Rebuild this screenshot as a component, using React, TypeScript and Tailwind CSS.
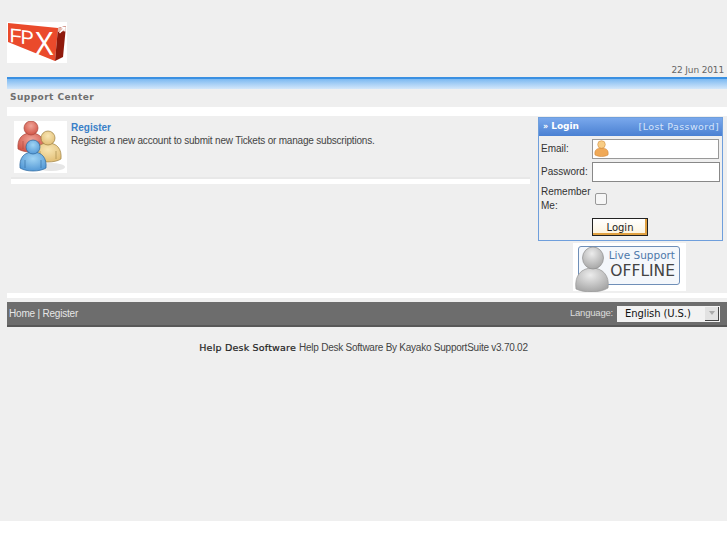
const sans = "font-['Liberation_Sans',Arial,sans-serif]";
const deja = "font-['DejaVu_Sans',Verdana,sans-serif]";

const Logo = () => (
  <svg width="60" height="41" viewBox="0 0 60 41" className="block bg-white">
    <polygon points="1,1 51,6 48,39 1,20" fill="#ea4a2b" />
    <polygon points="51,6 59,4 56,35 48,39" fill="#8f1a0c" />
    <polygon points="51,6 59,4 58,9 51,10" fill="#e6b9ae" />
    <text transform="translate(2.5 20) skewY(6)" fontFamily="Liberation Sans" fontSize="20" fill="#fff">F</text>
    <text transform="translate(13.5 21.5) skewY(8)" fontFamily="Liberation Sans" fontSize="20" fill="#fff">P</text>
    <text transform="translate(27.5 33) scale(0.88 1)" fontFamily="Liberation Sans" fontSize="33" fill="#fff">X</text>
    <path d="M52.5 11 L57.5 6 M54.5 5.8 H58 V9.5" stroke="#fff" strokeWidth="1.4" fill="none" />
  </svg>
);

const Person = ({ id, x, y, light, dark, edge }: { id: string; x: number; y: number; light: string; dark: string; edge: string }) => (
  <g transform={`translate(${x} ${y})`}>
    <defs>
      <radialGradient id={id} cx="50%" cy="35%" r="70%">
        <stop offset="0%" stopColor={light} />
        <stop offset="100%" stopColor={dark} />
      </radialGradient>
    </defs>
    <path d="M-13 21 C-14 11 -9 5 0 5 C9 5 14 11 13 21 C7 25 -7 25 -13 21Z" fill={`url(#${id})`} stroke={edge} strokeWidth="0.7" />
    <path d="M-8 13 V21 M8 13 V21" stroke={edge} strokeWidth="0.6" />
    <circle cx="0" cy="0" r="7" fill={`url(#${id})`} stroke={edge} strokeWidth="0.7" />
  </g>
);

const People = () => (
  <svg width="53" height="52" viewBox="0 0 53 52" className="block bg-white shrink-0">
    <ellipse cx="37" cy="46" rx="14" ry="4" fill="#e6e6e6" />
    <Person id="p1" x={17} y={7} light="#efa498" dark="#cf4c3e" edge="#a8463c" />
    <Person id="p2" x={34} y={17} light="#f8e6b4" dark="#e0bb70" edge="#9c7f42" />
    <Person id="p3" x={19} y={26} light="#a0d4f4" dark="#4f95d4" edge="#2b659c" />
  </svg>
);

const SmallUser = () => (
  <svg width="15" height="17" viewBox="0 0 15 17" className="block">
    <path d="M1 15 C0 10 3 8 7.5 8 C12 8 15 10 14 15 C10 17 5 17 1 15Z" fill="#f0a957" stroke="#c87f30" strokeWidth="0.5" />
    <circle cx="7.5" cy="4.5" r="3.8" fill="#f8cd85" stroke="#c87f30" strokeWidth="0.5" />
  </svg>
);

const LiveSupport = () => (
  <div className="relative w-[113px] h-[48px] bg-white">
    <div className="absolute left-[5px] top-[3px] w-[102px] h-[39px] rounded-[3px] border border-[#6f8fb8] bg-[#f4f7fb] flex flex-col items-end pr-[4px]">
      <span className={`${deja} text-[10.5px] leading-[14px] mt-[1px] text-[#4d77aa]`}>Live Support</span>
      <span className={`${deja} text-[15.5px] leading-[19px] text-[#444]`}>OFFLINE</span>
    </div>
    <svg width="36" height="46" viewBox="0 0 36 46" className="absolute left-[2px] top-[3px]">
      <defs>
        <radialGradient id="ls" cx="45%" cy="30%" r="75%">
          <stop offset="0%" stopColor="#ececec" />
          <stop offset="100%" stopColor="#a2a2a2" />
        </radialGradient>
      </defs>
      <path d="M1 43 C-1 29 7 22 17 22 C27 22 35 29 33 42 C25 47 9 47 1 43Z" fill="url(#ls)" stroke="#9a9a9a" strokeWidth="0.7" />
      <ellipse cx="18" cy="12" rx="10.5" ry="11" fill="url(#ls)" stroke="#8e8e8e" strokeWidth="0.7" />
    </svg>
  </div>
);

const fieldLabel = `${sans} text-[10px] text-[#333]`;

const LoginBox = () => (
  <div className="w-[185px] h-[124px] border border-[#6f9fdc] flex flex-col">
    <div className="h-[18px] bg-gradient-to-b from-[#79a8ec] to-[#4a80d2] flex items-center justify-between pl-[4px] pr-[3px]">
      <span className={`${deja} text-[9px] font-bold text-white flex items-center gap-[3px]`}>
        <span className="text-[8px]">»</span>Login
      </span>
      <span className={`${deja} text-[9.5px] tracking-[0.4px] text-[#d5e4fa]`}>[Lost Password]</span>
    </div>
    <div className="flex items-center h-[23px] mt-[1px] pl-[2px]">
      <span className={`${fieldLabel} w-[51px]`}>Email:</span>
      <div className="w-[127px] h-[20px] border border-[#999] bg-white flex items-center pl-[1px]">
        <SmallUser />
      </div>
    </div>
    <div className="flex items-center h-[23px] pl-[2px]">
      <span className={`${fieldLabel} w-[51px]`}>Password:</span>
      <div className="w-[128px] h-[20px] border border-[#888] bg-white" />
    </div>
    <div className="flex items-center mt-[2px] pl-[2px]">
      <span className={`${fieldLabel} w-[51px] leading-[14px]`}>Remember Me:</span>
      <div className="w-[12px] h-[12px] ml-[3px] rounded-[2px] border border-[#999] bg-[#f6f6f6]" />
    </div>
    <div className="pl-[53px] mt-[5px]">
      <div className={`${deja} w-[56px] h-[18px] border border-[#222] bg-gradient-to-b from-[#fff] to-[#fdf3dc] shadow-[inset_-2px_-2px_0_#e0a040] flex items-center justify-center text-[10px] text-[#222]`}>
        Login
      </div>
    </div>
  </div>
);

export default function App() {
  return (
    <div className="bg-white">
      <div className={`h-[521px] bg-[#efefef] ${sans}`}>
        <div className="pl-[7px]">
          <div className="pt-[22px] h-[77px]">
            <Logo />
            <div className={`${deja} text-[9px] tracking-[-0.15px] leading-[11px] text-[#666] text-right pr-[3px] mt-[2px]`}>22 Jun 2011</div>
          </div>
          <div className="h-[12px] border-t-2 border-[#3a90e2] bg-gradient-to-b from-[#7cb9f1] to-[#d3e7fa]" />
          <div className={`h-[18px] pl-[3px] flex items-center ${deja} text-[9px] font-bold tracking-[0.45px] text-[#6e6e6e]`}>
            Support Center
          </div>
          <div className="h-[9px] bg-white" />
          <div className="flex h-[177px]">
            <div className="w-[523px]">
              <div className="flex pl-[7px] pt-[5px] gap-[4px]">
                <People />
                <div className="pt-[1px]">
                  <div className="text-[10px] leading-[12px] font-bold text-[#3a7fc8]">Register</div>
                  <div className="text-[10px] tracking-[-0.2px] leading-[13px] text-[#444]">
                    Register a new account to submit new Tickets or manage subscriptions.
                  </div>
                </div>
              </div>
              <div className="ml-[4px] mt-[4px] h-[7px] border-t-[2px] border-[#e8e8e8] bg-white" />
            </div>
            <div className="ml-[8px] pt-[1px] flex flex-col">
              <LoginBox />
              <div className="ml-[35px] mt-[2px]">
                <LiveSupport />
              </div>
            </div>
          </div>
          <div className="h-[5px] bg-white" />
          <div className="h-[4px]" />
          <div className="h-[25px] bg-[#6d6d6d] border-b-2 border-[#585858] flex items-center justify-between pl-[2px] pr-[7px]">
            <span className="text-[10px] tracking-[-0.2px] text-[#e6e6e6] -mt-[1px]">Home | Register</span>
            <div className="flex items-center gap-[4px]">
              <span className="text-[9.5px] tracking-[-0.2px] text-[#dddddd]">Language:</span>
              <div className={`${deja} w-[103px] h-[16px] bg-[#f2f2f2] flex items-center justify-between pl-[8px] pr-[1px] text-[10px] tracking-[-0.1px] text-[#111]`}>
                English (U.S.)
                <div className="w-[14px] h-[14px] bg-[#e2e2e2] border-r border-b border-[#444] flex items-center justify-center">
                  <div className="w-0 h-0 border-x-[3px] border-x-transparent border-t-[4px] border-t-[#aaa]" />
                </div>
              </div>
            </div>
          </div>
          <div className="pr-[7px] mt-[14px] flex justify-center items-center gap-[3px] text-[10px] leading-[14px]">
            <span className={`${deja} text-[9.5px] text-[#222] tracking-[0.2px] [-webkit-text-stroke:0.2px_#222]`}>Help Desk Software</span>
            <span className="text-[#444] tracking-[-0.24px]">Help Desk Software By Kayako SupportSuite v3.70.02</span>
          </div>
        </div>
      </div>
      <div className="h-[24px]" />
    </div>
  );
}
